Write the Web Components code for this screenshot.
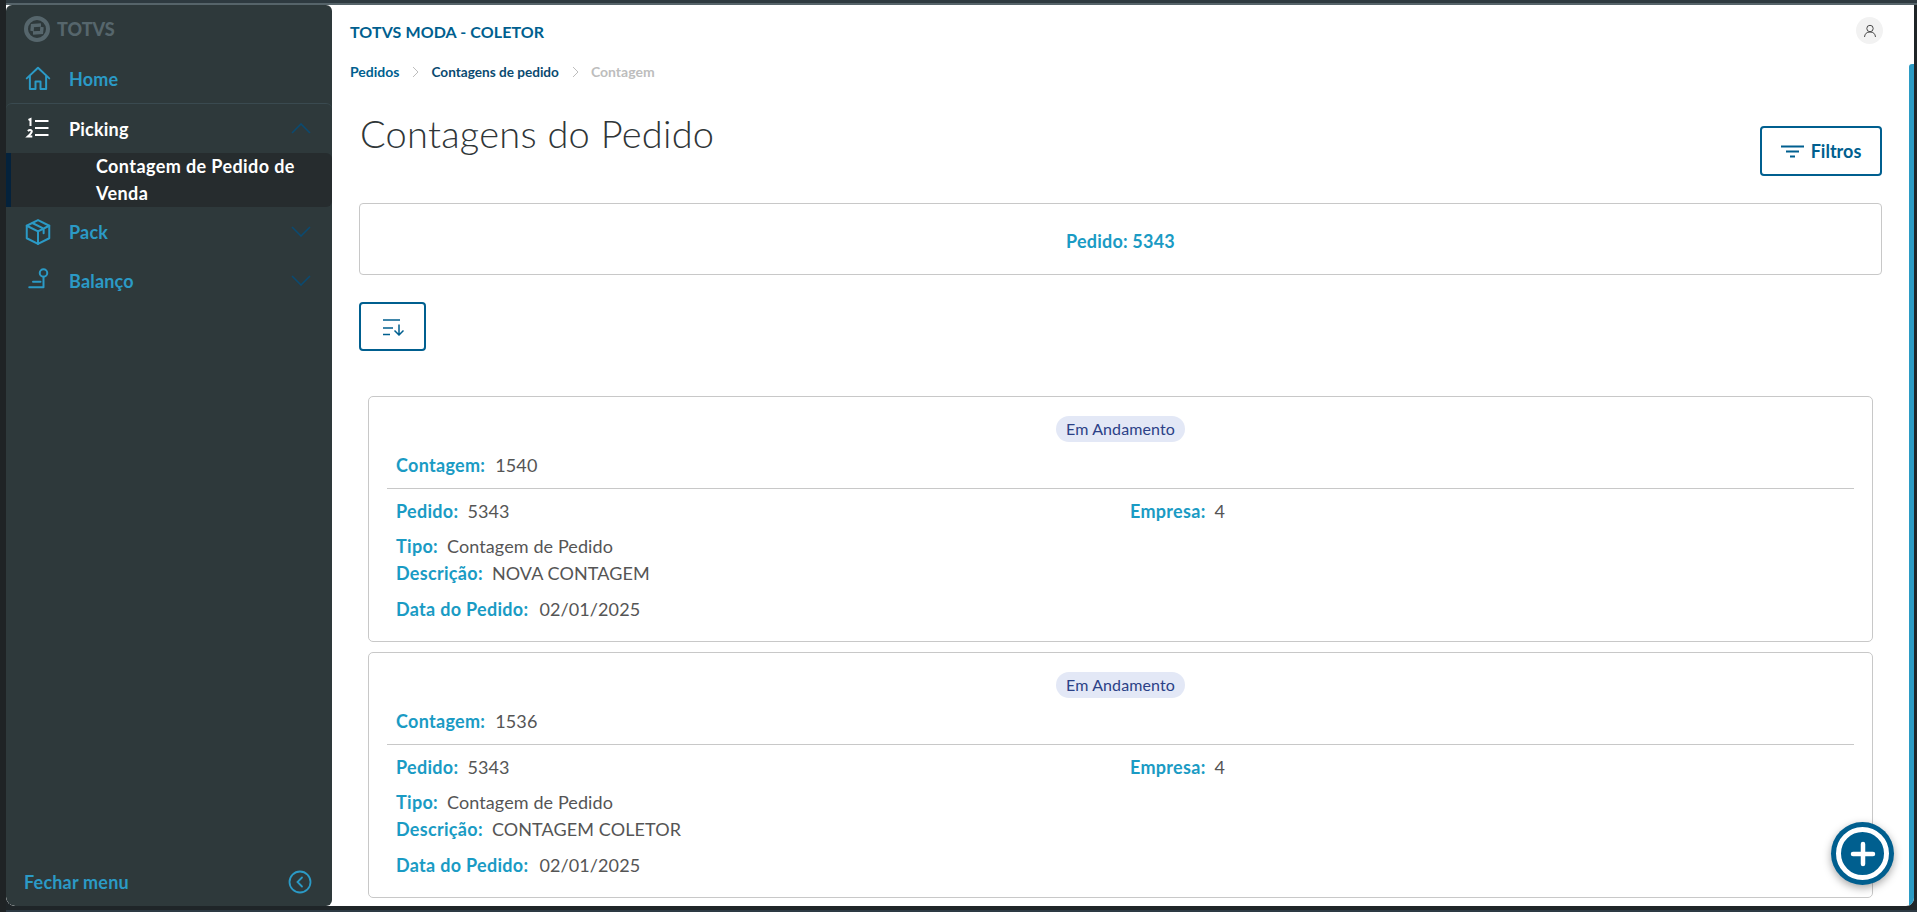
<!DOCTYPE html>
<html lang="pt-BR"><head><meta charset="utf-8"><title>Contagens do Pedido</title>
<style>
html,body{margin:0;height:100%;overflow:hidden}
body{background:#1f2528;font-family:Lato,"Liberation Sans",sans-serif}
</style></head><body>
<app-shell>
  <side-menu slot="menu"></side-menu>
  <top-header slot="top"></top-header>
  <page-title slot="main"></page-title>
  <info-banner slot="main">Pedido: 5343</info-banner>
  <sort-button slot="main"></sort-button>
  <div slot="main" style="display:flex;flex-direction:column;gap:9.5px;padding:45px 9px 0">
  <count-card numero="1540" desc="NOVA CONTAGEM"></count-card>
  <count-card numero="1536" desc="CONTAGEM COLETOR"></count-card>
  </div>
  <fab-add slot="fab"></fab-add>
</app-shell>
<script>
const def=(name,html)=>customElements.define(name,class extends HTMLElement{
  constructor(){super();this.attachShadow({mode:'open'});}
  connectedCallback(){this.shadowRoot.innerHTML=typeof html==='function'?html(this):html;}
});
const F='Lato,"Liberation Sans",sans-serif';
def('app-shell',`<style>
:host{display:block;height:912px;box-sizing:border-box;padding:5px 3px 6px 6px;background:linear-gradient(90deg,#1f2325 6px,transparent 6px),linear-gradient(#2e3a40 0,#2e3a40 3px,#56646a 3px,#56646a 5px,#1f2528 5px,#1f2528 910px,#2d3a44 910px)}
.win{height:901px;display:flex;background:#fff;border-radius:0 0 8px 9px;overflow:hidden;position:relative}
.menu{width:326px;flex:none;display:flex}
.right{flex:1;min-width:0;display:flex;flex-direction:column;position:relative}
.scroll{flex:1;padding:0 32px 0 27px;overflow:hidden}
.bar{position:absolute;right:0;top:59px;bottom:0;width:5px;background:#2b9bc4;border-radius:3px 0 0 0}
.fab{position:absolute;right:20px;bottom:21px}
</style><div class="win"><div class="menu"><slot name="menu"></slot></div>
<div class="right"><slot name="top"></slot><div class="scroll"><slot name="main"></slot></div><div class="bar"></div><div class="fab"><slot name="fab"></slot></div></div></div>`);
const ic=(d,c,w=1.6)=>`<svg width="30" height="30" viewBox="0 0 24 24" fill="none" stroke="${c}" stroke-width="${w}" stroke-linecap="round" stroke-linejoin="round">${d}</svg>`;
const chev=(up)=>`<svg class="chev" width="20" height="11" viewBox="0 0 20 11" fill="none" stroke="#0b4a70" stroke-width="1.6"><path d="${up?'M1 10 L10 1 L19 10':'M1 1 L10 10 L19 1'}"/></svg>`;
const B='#2b9ac6';
def('side-menu',`<style>
:host{display:flex;flex-direction:column;width:326px;background:#2e393b;border-radius:6px 6px 6px 9px;font:700 18px/24px ${F};color:${B};box-sizing:border-box;height:901px;letter-spacing:.2px}
.logo{height:49px;display:flex;align-items:flex-start;padding:11px 0 0 18px;box-sizing:border-box;gap:7px;color:#56666c;font:900 18px/27px ${F};letter-spacing:0;flex:none}
.item{display:flex;align-items:center;height:49px;position:relative;flex:none;box-sizing:border-box}
.ico{width:30px;height:30px;margin-left:16.500px;margin-right:16.500px;display:flex}
.pick{color:#fff;border-top:1px solid #3a4a50;border-radius:6px 6px 0 0;height:50px}
.chev{position:absolute;right:21px;top:50%;margin-top:-5.500px}
.sub{flex:none;background:#262c2e;border-left:5px solid #04223c;border-radius:0 6px 6px 0;color:#fff;font:700 18px/27px ${F};letter-spacing:.4px;padding:0 20px 0 85px;height:54px}
.foot{margin-top:auto;height:48px;display:flex;align-items:center;justify-content:space-between;padding:0 20px 0 18px;font-weight:700}
</style>
<div class="logo"><svg width="26" height="26" viewBox="0 0 26 26" fill="none" stroke="#56666c" stroke-width="4" aria-hidden="true"><circle cx="13" cy="13" r="11"/><path d="M8 15 8.500 9.500 17 9M18 11 17.500 16.500 9 17" stroke-width="3.400"/></svg><span>TOTVS</span></div>
<div class="item"><span class="ico">${ic('<path d="M3 11.500 12 3l9 8.500"/><path d="M5.500 9.500V20H10v-6h4v6h4.500V9.500"/>',B)}</span>Home</div>
<div class="item pick"><span class="ico"><svg width="30" height="30" viewBox="0 0 30 30" fill="none" stroke="#fff" stroke-width="2"><path d="M12 7h13.500M12 14h13.500M12 21h13.500" stroke-width="1.800"/><path d="M5.500 6 7.500 5v7"/><path d="M4.800 17q2.500-2 4 0 .4 1.500-4 5.500h4.500"/></svg></span>Picking${chev(1)}</div>
<div class="sub">Contagem de Pedido de Venda</div>
<div class="item"><span class="ico">${ic('<path d="M12 2.500 21 7v10l-9 4.500L3 17V7z"/><path d="M3 7l9 4.500L21 7M12 11.500v10M7.500 4.800l9 4.500V13"/>',B)}</span>Pack${chev(0)}</div>
<div class="item"><span class="ico">${ic('<circle cx="16.400" cy="5.600" r="3"/><path d="M16.400 8.600V17H5M8 12.500h6"/>',B)}</span>Balanço${chev(0)}</div>
<div class="foot"><span>Fechar menu</span><svg width="24" height="24" viewBox="0 0 24 24" fill="none" stroke="${B}" stroke-width="1.800"><circle cx="12" cy="12" r="10.500"/><path d="M14 7.500 9.500 12l4.500 4.500" stroke-linecap="round"/></svg></div>`);
def('top-header',`<style>
:host{display:block;flex:none;height:89px;box-sizing:border-box;padding:17px 31px 0 18px;position:relative;font-family:${F}}
.t{font:700 16px/20px ${F};color:#005f8f;letter-spacing:.1px}
.bc{display:flex;align-items:center;margin-top:21px;font:700 14px/18px ${F};color:#005f8f}
.bc svg{margin:0 11px 0 13px}
.cur{color:#0a4a70;font-size:13.6px}.off{color:#bdbdbd}
.av{position:absolute;right:31px;top:12px;width:27px;height:27px;border-radius:50%;background:#f2f2f2;display:flex;align-items:center;justify-content:center}
</style><div class="t">TOTVS MODA - COLETOR</div>
<div class="bc"><span>Pedidos</span><svg width="8" height="12" viewBox="0 0 8 12" fill="none" stroke="#bdbdbd"><path d="M1 1l5 5-5 5"/></svg><span class="cur">Contagens de pedido</span><svg width="8" height="12" viewBox="0 0 8 12" fill="none" stroke="#bdbdbd"><path d="M1 1l5 5-5 5"/></svg><span class="off">Contagem</span></div>
<div class="av"><svg width="14" height="14" viewBox="0 0 14 14" fill="none" stroke="#4a4a4a" stroke-width="1"><circle cx="7" cy="4.500" r="3.200"/><path d="M1.500 13q.5-5 5.500-5t5.500 5"/></svg></div>`);
def('page-title',`<style>
:host{display:flex;justify-content:space-between;align-items:flex-start;height:109px;font-family:${F}}
h1{margin:15px 0 0 1px;font:300 38px/48px ${F};letter-spacing:.25px;color:#2f3638}
button{all:unset;box-sizing:border-box;width:122px;height:50px;border:2px solid #005f8f;border-radius:4px;display:flex;align-items:center;justify-content:center;gap:7px;color:#005f8f;font:700 18px/20px ${F};margin-top:32px}
</style><h1>Contagens do Pedido</h1><button><svg width="23" height="13" viewBox="0 0 23 13" fill="none" stroke="#005f8f" stroke-width="1.800"><path d="M0 1.500h23M5 6.500h13M9 11.500h5"/></svg>Filtros</button>`);
def('info-banner',`<style>
:host{display:flex;align-items:center;justify-content:center;height:72px;box-sizing:border-box;padding-top:4px;border:1px solid #c8c8c8;border-radius:4px;color:#1a9bc4;font:700 18px/20px ${F};letter-spacing:.2px}
</style><slot></slot>`);
def('sort-button',`<style>
:host{display:flex;margin-top:27px;width:67px;height:49px;box-sizing:border-box;padding:2px 0 0 1px;border:2px solid #005f8f;border-radius:4px;align-items:center;justify-content:center}
</style><svg width="21" height="17" viewBox="0 0 21 17" fill="none" stroke="#005f8f" stroke-width="1.500"><path d="M0 1h17M0 9h10M0 15.500h7M16 5.500V16M11.500 11.500 16 16l4.500-4.500"/></svg>`);
def('count-card',el=>`<style>
:host{display:block;box-sizing:border-box;height:246px;border:1px solid #c8c8c8;border-radius:5px;padding:19px 18px 0;font:400 18px/22px ${F};color:#555;letter-spacing:.1px}
.tag{display:block;width:fit-content;margin:0 auto;background:#e3e8f6;color:#2b4187;border-radius:14px;font:400 16px/26px ${F};letter-spacing:.1px;padding:0 10px}
.r{display:flex;gap:9px;padding-left:9px}
b{color:#1a9bc4;font-weight:700;letter-spacing:.3px}
hr{border:0;border-top:1px solid #c8c8c8;margin:12px 0 0}
.g{display:grid;grid-template-columns:734px 1fr;padding-left:9px;margin-top:11px;margin-bottom:13px}
.g div{display:flex;gap:9px}
</style><span class="tag">Em Andamento</span>
<div class="r" style="margin-top:12px;gap:10px"><b>Contagem:</b><span>${el.getAttribute('numero')}</span></div><hr>
<div class="g"><div><b>Pedido:</b><span>5343</span></div><div><b>Empresa:</b><span>4</span></div></div>
<div class="r" style="margin-bottom:5px"><b>Tipo:</b><span>Contagem de Pedido</span></div>
<div class="r" style="margin-bottom:14px"><b>Descrição:</b><span>${el.getAttribute('desc')}</span></div>
<div class="r" style="gap:11px"><b>Data do Pedido:</b><span>02/01/2025</span></div>`);
def('fab-add',`<style>
:host{display:block;width:63px;height:63px;border-radius:50%;background:#005f8f;box-shadow:0 3px 8px rgba(0,0,0,.35);position:relative}
div{position:absolute;inset:5px;border:5px solid #fff;border-radius:50%;display:flex;align-items:center;justify-content:center}
</style><div><svg width="26" height="26" viewBox="0 0 26 26" stroke="#fff" stroke-width="4.500" stroke-linecap="round"><path d="M13 3v20M3 13h20"/></svg></div>`);
</script></body></html>
